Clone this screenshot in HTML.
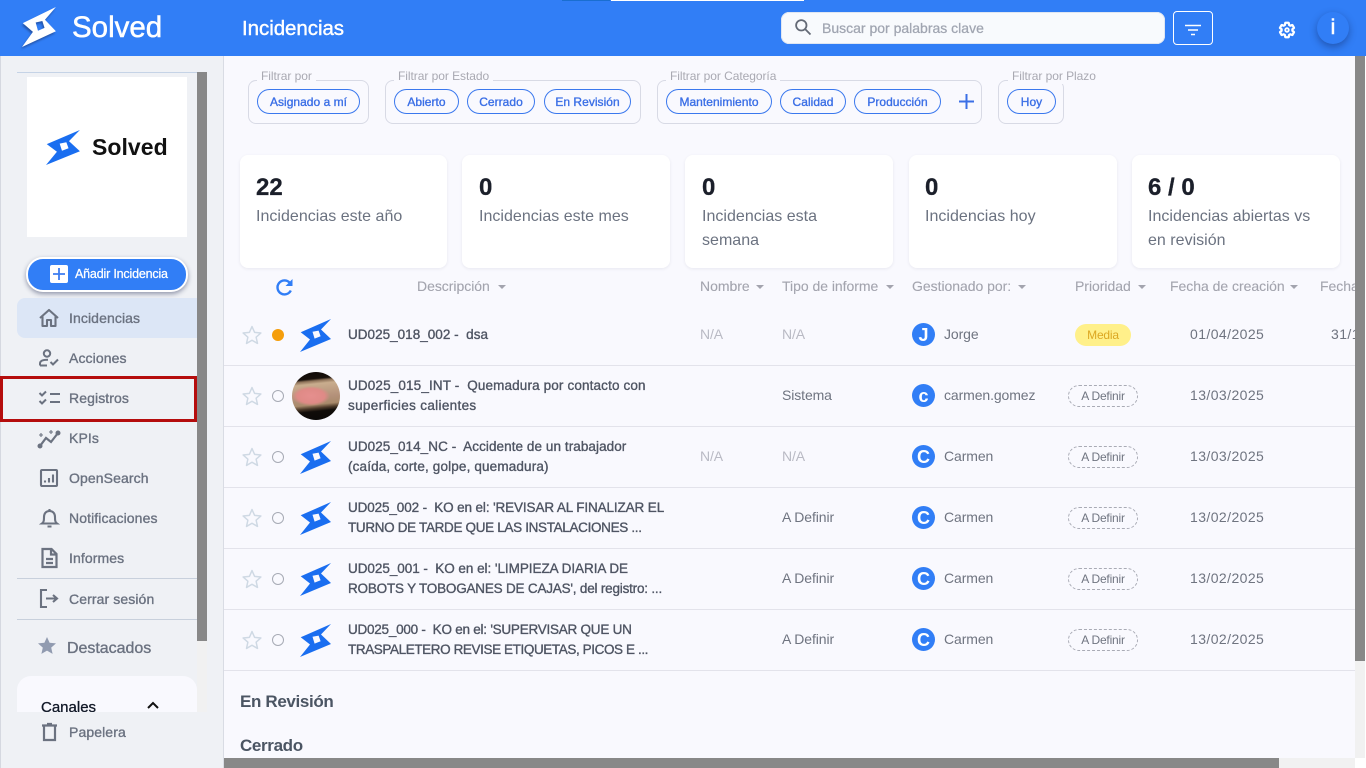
<!DOCTYPE html>
<html lang="es">
<head>
<meta charset="utf-8">
<title>Solved - Incidencias</title>
<style>
html,body{margin:0;padding:0;width:1366px;height:768px;overflow:hidden;background:#fff}
body{position:relative;font-family:"Liberation Sans",sans-serif;color:#4b5563}
.a,.t{position:absolute}
.t{white-space:nowrap;line-height:20px}
svg{position:absolute;display:block;overflow:visible}
#hdr{position:absolute;left:0;top:0;width:1366px;height:56px;background:#317ef6}
#side{position:absolute;left:0;top:56px;width:223px;height:712px;background:#eff1f5;border-right:1px solid #d9dce4;box-shadow:inset 1px 0 0 #d5d8e0}
#main{position:absolute;left:224px;top:56px;width:1131px;height:702px;background:#f9f9fe;overflow:hidden}
.nav{font-size:14px;color:#6b7280;-webkit-text-stroke:.35px #6b7280;left:69px;letter-spacing:.1px}
.g{position:absolute;top:80px;height:42px;border:1px solid #d8dae5;border-radius:8px}
.gl{position:absolute;top:69px;height:15px;line-height:15px;font-size:12px;color:#a9a9b2;background:#f9f9fe;padding:0 4px;white-space:nowrap;letter-spacing:-.05px}
.p{position:absolute;top:89px;height:23px;line-height:25px;border:1.2px solid #3a78ee;border-radius:13px;text-align:center;font-size:12px;color:#3b6fe6;-webkit-text-stroke:.35px #3b6fe6;box-sizing:content-box;white-space:nowrap;letter-spacing:.03px}
.c{position:absolute;top:155px;height:113px;background:#fff;border-radius:8px;box-shadow:0 1px 3px rgba(40,40,80,.08)}
.n{font-size:24px;font-weight:700;color:#1b1f2a;top:178px;-webkit-text-stroke:.3px #1b1f2a}
.l{font-size:16px;color:#6b7280;letter-spacing:.02px}
.h{font-size:14px;color:#a3a4ae;-webkit-text-stroke:.1px #a3a4ae;top:276px;letter-spacing:-.03px}
.car{position:absolute;top:285px;width:0;height:0;border-left:4.5px solid transparent;border-right:4.5px solid transparent;border-top:4.5px solid #a3a4ae}
.r{position:absolute;left:0;height:0;width:1366px}
.ln{position:absolute;left:224px;width:1131px;height:1px;background:#e3e3eb}
.d{font-size:13.5px;color:#4f5563;-webkit-text-stroke:.35px #4f5563;left:348px;margin-top:1px}
.m{font-size:14px;color:#6f7480;letter-spacing:-.1px}
.dt{letter-spacing:.42px}
.na{color:#b9bac4}
.av{position:absolute;left:912px;width:23px;height:23px;border-radius:50%;background:#317ef6;color:#fff;font-size:18px;font-weight:700;text-align:center;line-height:24px}
.ch{position:absolute;left:1068px;width:68px;height:20px;line-height:20px;border:1px dashed #a9abb5;border-radius:11px;text-align:center;font-size:12px;color:#6f7480;letter-spacing:-.2px}
.st{position:absolute;left:272px;width:10px;height:10px;border:1.4px solid #a7abb5;border-radius:50%}
</style>
</head>
<body>
<svg width="0" height="0" style="position:absolute">
<defs>
<symbol id="bolt" viewBox="0 0 32 33" preserveAspectRatio="none">
<path fill-rule="evenodd" d="M31 0L.7 13.3L10 20.5L0 33L31 20L21 10.5ZM12.5 12.8L18.6 11.6L20.6 17.2L14.6 19.6Z"/>
</symbol>
<symbol id="star" viewBox="0 0 24 24">
<path d="M12 2.8l2.8 6.3 6.9.7-5.2 4.6 1.5 6.8-6-3.5-6 3.5 1.5-6.8-5.2-4.6 6.9-.7z" fill="none" stroke="#cfd9e4" stroke-width="1.6" stroke-linejoin="round"/>
</symbol>
</defs>
</svg>

<!-- Header -->
<div id="hdr"></div>
<div class="a" style="left:562px;top:0;width:48px;height:1px;background:#1a6ed0"></div>
<div class="a" style="left:611px;top:0;width:193px;height:1px;background:#fff"></div>
<svg style="left:22px;top:7px;filter:drop-shadow(-1px 2px 1px rgba(20,30,70,.45))" width="35" height="40"><use href="#bolt" width="35" height="40" fill="#fff"/></svg>
<div class="t" style="left:72px;top:10px;line-height:36px;font-size:29.5px;color:#fff;-webkit-text-stroke:.5px #fff;letter-spacing:0">Solved</div>
<div class="t" style="left:242px;top:17px;line-height:24px;font-size:20.5px;color:#fff;-webkit-text-stroke:.4px #fff;letter-spacing:-.05px">Incidencias</div>
<div class="a" style="left:781px;top:12px;width:384px;height:32px;border-radius:8px;background:#f8fafd;box-shadow:0 0 0 1px #dfe6f2 inset"></div>
<svg style="left:794px;top:18px" width="18" height="18" viewBox="0 0 18 18" fill="none" stroke="#646a76" stroke-width="1.8"><circle cx="7.3" cy="7.3" r="5.2"/><path d="M11.3 11.3L16.5 16.5"/></svg>
<div class="t" style="left:822px;top:18px;font-size:14px;color:#a0a5b1;-webkit-text-stroke:.25px #a0a5b1;letter-spacing:0">Buscar por palabras clave</div>
<div class="a" style="left:1173px;top:11px;width:38px;height:32px;border:1px solid #fff;border-radius:4px"></div>
<svg style="left:1185px;top:24px" width="16" height="12" viewBox="0 0 16 12" stroke="#fff" stroke-width="1.6"><path d="M0 1.5H16M3 6H13M6 10.5H10"/></svg>
<svg style="left:1278px;top:21px" width="18" height="18" viewBox="0 0 24 24" fill="none" stroke="#fff" stroke-width="3" stroke-linejoin="round"><path d="M19.14 12.94c.04-.3.06-.61.06-.94 0-.32-.02-.64-.07-.94l2.03-1.58a.49.49 0 0 0 .12-.61l-1.92-3.32a.488.488 0 0 0-.59-.22l-2.39.96c-.5-.38-1.03-.7-1.62-.94l-.36-2.54a.484.484 0 0 0-.48-.41h-3.84c-.24 0-.43.17-.47.41l-.36 2.54c-.59.24-1.13.57-1.62.94l-2.39-.96c-.22-.08-.47 0-.59.22L2.74 8.87c-.12.21-.08.47.12.61l2.03 1.58c-.05.3-.09.63-.09.94s.02.64.07.94l-2.03 1.58a.49.49 0 0 0-.12.61l1.92 3.32c.12.22.37.29.59.22l2.39-.96c.5.38 1.03.7 1.62.94l.36 2.54c.05.24.24.41.48.41h3.84c.24 0 .44-.17.47-.41l.36-2.54c.59-.24 1.13-.56 1.62-.94l2.39.96c.22.08.47 0 .59-.22l1.92-3.32c.12-.22.07-.47-.12-.61l-2.01-1.58z"/><circle cx="12" cy="12" r="2.4" stroke-width="2.4"/></svg>
<div class="a" style="left:1317px;top:12px;width:32px;height:32px;border-radius:50%;background:#317ef6;box-shadow:0 3px 8px rgba(15,35,90,.45);color:#fff;text-align:center;font-size:21px;line-height:32px;-webkit-text-stroke:.6px #fff">i</div>

<!-- Sidebar -->
<div id="side"></div>
<div class="a" style="left:17px;top:72px;width:180px;height:1px;background:#c5d3e6"></div>
<div class="a" style="left:27px;top:77px;width:160px;height:160px;background:#fff"></div>
<div class="a" style="left:197px;top:72px;width:10px;height:569px;background:#888"></div>
<div class="a" style="left:197px;top:641px;width:10px;height:71px;background:#f1f1f1"></div>
<svg style="left:46px;top:130px" width="35" height="35"><use href="#bolt" width="35" height="35" fill="#1a6ef0"/></svg>
<div class="t" style="left:92px;top:133px;line-height:28px;font-size:23px;font-weight:700;color:#111;letter-spacing:.05px">Solved</div>

<div class="a" style="left:26px;top:257px;width:158px;height:31px;border:2px solid #fff;border-radius:17px;background:#317ef6;box-shadow:0 2px 5px rgba(30,40,80,.45)"></div>
<div class="a" style="left:50px;top:265px;width:18px;height:18px;background:#fff;border-radius:2px"></div>
<svg style="left:53px;top:268px" width="12" height="12" stroke="#3c7cf0" stroke-width="1.8"><path d="M6 0V12M0 6H12"/></svg>
<div class="t" style="left:75px;top:264px;font-size:12.5px;color:#fff;-webkit-text-stroke:.25px #fff;letter-spacing:-.18px">Añadir Incidencia</div>

<div class="a" style="left:17px;top:298px;width:180px;height:40px;border-radius:8px 0 0 8px;background:#dce6f6"></div>
<div class="a" style="left:0;top:376px;width:197px;height:46px;box-sizing:border-box;border:3px solid #b50d0d"></div>

<svg style="left:39px;top:308px" width="20" height="20" viewBox="0 0 20 20" fill="none" stroke="#6b7280" stroke-width="2.1" stroke-linejoin="round"><path d="M1 10L10 2L19 10M3.5 8.5V18H8V12H12V18H16.5V8.5"/></svg>
<div class="t nav" style="top:308px">Incidencias</div>
<svg style="left:39px;top:349px" width="20" height="18" viewBox="0 0 20 18" fill="none" stroke="#6b7280" stroke-width="2"><circle cx="8" cy="4.5" r="3.2"/><path d="M1 16.5V14.5C1 12 4 10.8 9 10.8M1 16.5H8M11.5 13L14 15.5L19 10.5"/></svg>
<div class="t nav" style="top:348px">Acciones</div>
<svg style="left:39px;top:391px" width="21" height="14" viewBox="0 0 21 14" fill="none" stroke="#6b7280" stroke-width="2"><path d="M0.5 2L3 4.5L7 .5M.5 10L3 12.5L7 8.5M11 3H21M11 11H21"/></svg>
<div class="t nav" style="top:388px">Registros</div>
<svg style="left:38px;top:429px" width="23" height="19" viewBox="0 0 23 19" fill="none" stroke="#6b7280" stroke-width="2.2"><path d="M2 17L8 9L13 13L20 4"/><circle cx="2" cy="17" r="1.4" fill="#6b7280"/><circle cx="20" cy="4" r="1.4" fill="#6b7280"/><path stroke-width="1.1" d="M3 4V8M1 6H5M13 1V5M11 3H15"/></svg>
<div class="t nav" style="top:428px">KPIs</div>
<svg style="left:40px;top:469px" width="18" height="18" viewBox="0 0 18 18" fill="none" stroke="#6b7280" stroke-width="2.1"><rect x="1" y="1" width="16" height="16" rx="1"/><path d="M5 13.5V11.5M9 13.5V9M13 13.5V5.5"/></svg>
<div class="t nav" style="top:468px">OpenSearch</div>
<svg style="left:41px;top:508px" width="17" height="20" viewBox="0 0 17 20" fill="none" stroke="#6b7280" stroke-width="2.1"><path d="M1 15.5C3 14 3 12 3 9C3 5.5 5 3 8.5 3C12 3 14 5.5 14 9C14 12 14 14 16 15.5ZM8.5 1V3M6.5 18.5H10.5"/></svg>
<div class="t nav" style="top:508px">Notificaciones</div>
<svg style="left:41px;top:548px" width="17" height="20" viewBox="0 0 17 20" fill="none" stroke="#6b7280" stroke-width="2.2"><path d="M1.5 1H10.5L15.5 6V19H1.5ZM10 1V6.5H15.5M5 11H12M5 15H12"/></svg>
<div class="t nav" style="top:548px">Informes</div>
<div class="a" style="left:17px;top:578px;width:180px;height:1px;background:#c8d0dc"></div>
<svg style="left:40px;top:589px" width="19" height="19" viewBox="0 0 19 19" fill="none" stroke="#6b7280" stroke-width="2.1"><path d="M7 1H1V18H7M6 9.5H17M13 6L17 9.5L13 13"/></svg>
<div class="t nav" style="top:589px">Cerrar sesión</div>
<div class="a" style="left:17px;top:619px;width:180px;height:1px;background:#c8d0dc"></div>
<svg style="left:38px;top:637px" width="18" height="17" viewBox="0 0 18 17" fill="#919bb0"><path d="M9 0l2.6 5.8 6.4.6-4.8 4.2 1.4 6.3L9 13.6l-5.6 3.3 1.4-6.3L0 6.4l6.4-.6z"/></svg>
<div class="t" style="left:67px;top:639px;font-size:16px;color:#6b7280;-webkit-text-stroke:.35px #6b7280;letter-spacing:-.03px">Destacados</div>
<div class="a" style="left:17px;top:676px;width:180px;height:36px;border-radius:14px 14px 0 0;background:#f9f9fe;overflow:hidden">
<div class="t" style="left:24px;top:22px;font-size:15px;color:#111827;-webkit-text-stroke:.3px #111827">Canales</div>
<svg style="left:130px;top:25px" width="12" height="8" fill="none" stroke="#111" stroke-width="2"><path d="M1 7L6 2L11 7"/></svg>
</div>
<svg style="left:42px;top:723px" width="15" height="18" viewBox="0 0 15 18" fill="none" stroke="#6b7280" stroke-width="2.2"><path d="M0 2.5H15M5 1H10M2 3V17H13V3"/></svg>
<div class="t nav" style="top:722px">Papelera</div>

<!-- Main -->
<div id="main"></div>
<div class="a" style="left:224px;top:56px;width:1131px;height:702px;overflow:hidden"><div class="a" style="left:-224px;top:-56px;width:1366px;height:768px">

<div class="g" style="left:248px;width:119px"></div><div class="gl" style="left:257px">Filtrar por</div>
<div class="p" style="left:257px;width:101px">Asignado a mí</div>
<div class="g" style="left:385px;width:254px"></div><div class="gl" style="left:394px">Filtrar por Estado</div>
<div class="p" style="left:394px;width:63px">Abierto</div>
<div class="p" style="left:467px;width:66px">Cerrado</div>
<div class="p" style="left:544px;width:85px">En Revisión</div>
<div class="g" style="left:657px;width:323px"></div><div class="gl" style="left:666px">Filtrar por Categoría</div>
<div class="p" style="left:666px;width:104px">Mantenimiento</div>
<div class="p" style="left:780px;width:64px">Calidad</div>
<div class="p" style="left:854px;width:85px">Producción</div>
<svg style="left:959px;top:94px" width="15" height="15" stroke="#3b6fe6" stroke-width="2"><path d="M7.5 0V15M0 7.5H15"/></svg>
<div class="g" style="left:998px;width:64px"></div><div class="gl" style="left:1008px">Filtrar por Plazo</div>
<div class="p" style="left:1007px;width:47px">Hoy</div>

<div class="c" style="left:240px;width:207px"></div>
<div class="c" style="left:462px;width:208px"></div>
<div class="c" style="left:685px;width:208px"></div>
<div class="c" style="left:909px;width:208px"></div>
<div class="c" style="left:1132px;width:208px"></div>
<div class="t n" style="left:256px">22</div>
<div class="t l" style="left:256px;top:207px">Incidencias este año</div>
<div class="t n" style="left:479px">0</div>
<div class="t l" style="left:479px;top:207px">Incidencias este mes</div>
<div class="t n" style="left:702px">0</div>
<div class="t l" style="left:702px;top:207px">Incidencias esta</div>
<div class="t l" style="left:702px;top:231px">semana</div>
<div class="t n" style="left:925px">0</div>
<div class="t l" style="left:925px;top:207px">Incidencias hoy</div>
<div class="t n" style="left:1148px">6 / 0</div>
<div class="t l" style="left:1148px;top:207px">Incidencias abiertas vs</div>
<div class="t l" style="left:1148px;top:231px">en revisión</div>

<svg style="left:275px;top:278px" width="19" height="19" viewBox="0 0 19 19" fill="none" stroke="#317ef6" stroke-width="2.4"><path d="M15.8 12.5A7 7 0 1 1 14.5 4.5L16 6"/><path fill="#317ef6" stroke="none" d="M17.5 1V8H10.5Z"/></svg>
<div class="t h" style="left:417px">Descripción</div><div class="car" style="left:498px"></div>
<div class="t h" style="left:700px">Nombre</div><div class="car" style="left:756px"></div>
<div class="t h" style="left:782px">Tipo de informe</div><div class="car" style="left:886px"></div>
<div class="t h" style="left:912px">Gestionado por:</div><div class="car" style="left:1018px"></div>
<div class="t h" style="left:1075px">Prioridad</div><div class="car" style="left:1138px"></div>
<div class="t h" style="left:1170px">Fecha de creación</div><div class="car" style="left:1290px"></div>
<div class="t h" style="left:1320px">Fecha</div>

<!-- Row 1 -->
<div class="r" style="top:304px">
<svg style="left:241px;top:20px" width="22" height="22"><use href="#star" width="22" height="22"/></svg>
<div class="a" style="left:272px;top:25px;width:12px;height:12px;border-radius:50%;background:#f59e0b"></div>
<svg style="left:300px;top:15px" width="32" height="33"><use href="#bolt" width="32" height="33" fill="#1a6ef0"/></svg>
<div class="t d" style="top:20px;letter-spacing:.02px">UD025_018_002 -&nbsp; dsa</div>
<div class="t m na" style="left:700px;top:20px">N/A</div>
<div class="t m na" style="left:782px;top:20px">N/A</div>
<div class="av" style="top:19px">J</div>
<div class="t m" style="left:944px;top:20px">Jorge</div>
<div class="a" style="left:1075px;top:20px;width:56px;height:22px;border-radius:11px;background:#fff08a;color:#dca722;font-size:12px;line-height:22px;text-align:center;letter-spacing:-.2px">Media</div>
<div class="t m dt" style="left:1190px;top:20px">01/04/2025</div>
<div class="t m dt" style="left:1331px;top:20px">31/1</div>
</div>
<div class="ln" style="top:365px"></div>

<!-- Row 2 -->
<div class="r" style="top:365px">
<svg style="left:241px;top:20px" width="22" height="22"><use href="#star" width="22" height="22"/></svg>
<div class="st" style="top:25px"></div>
<div class="a" style="left:292px;top:7px;width:48px;height:48px;border-radius:50%;background:radial-gradient(ellipse 19px 10px at 19px 24px,#e58f8e 0,#df8a86 72%,rgba(214,130,120,0) 100%),linear-gradient(174deg,#0e0907 0,#17100b 17%,#8d7259 21%,#c9ad8e 27%,#b4917a 52%,#a98a6b 66%,#4c3929 73%,#100c09 79%,#0a0807 100%)"></div>
<div class="t d" style="top:10px;letter-spacing:.14px">UD025_015_INT -&nbsp; Quemadura por contacto con</div>
<div class="t d" style="top:30px;letter-spacing:.33px">superficies calientes</div>
<div class="t m" style="left:782px;top:20px">Sistema</div>
<div class="av" style="top:19px">c</div>
<div class="t m" style="left:944px;top:20px">carmen.gomez</div>
<div class="ch" style="top:20px">A Definir</div>
<div class="t m dt" style="left:1190px;top:20px">13/03/2025</div>
</div>
<div class="ln" style="top:426px"></div>

<!-- Row 3 -->
<div class="r" style="top:426px">
<svg style="left:241px;top:20px" width="22" height="22"><use href="#star" width="22" height="22"/></svg>
<div class="st" style="top:25px"></div>
<svg style="left:300px;top:15px" width="32" height="33"><use href="#bolt" width="32" height="33" fill="#1a6ef0"/></svg>
<div class="t d" style="top:10px;letter-spacing:.07px">UD025_014_NC -&nbsp; Accidente de un trabajador</div>
<div class="t d" style="top:30px;letter-spacing:.15px">(caída, corte, golpe, quemadura)</div>
<div class="t m na" style="left:700px;top:20px">N/A</div>
<div class="t m na" style="left:782px;top:20px">N/A</div>
<div class="av" style="top:19px">C</div>
<div class="t m" style="left:944px;top:20px">Carmen</div>
<div class="ch" style="top:20px">A Definir</div>
<div class="t m dt" style="left:1190px;top:20px">13/03/2025</div>
</div>
<div class="ln" style="top:487px"></div>

<!-- Row 4 -->
<div class="r" style="top:487px">
<svg style="left:241px;top:20px" width="22" height="22"><use href="#star" width="22" height="22"/></svg>
<div class="st" style="top:25px"></div>
<svg style="left:300px;top:15px" width="32" height="33"><use href="#bolt" width="32" height="33" fill="#1a6ef0"/></svg>
<div class="t d" style="top:10px;letter-spacing:-.12px">UD025_002 -&nbsp; KO en el: 'REVISAR AL FINALIZAR EL</div>
<div class="t d" style="top:30px;letter-spacing:-.33px">TURNO DE TARDE QUE LAS INSTALACIONES ...</div>
<div class="t m" style="left:782px;top:20px">A Definir</div>
<div class="av" style="top:19px">C</div>
<div class="t m" style="left:944px;top:20px">Carmen</div>
<div class="ch" style="top:20px">A Definir</div>
<div class="t m dt" style="left:1190px;top:20px">13/02/2025</div>
</div>
<div class="ln" style="top:548px"></div>

<!-- Row 5 -->
<div class="r" style="top:548px">
<svg style="left:241px;top:20px" width="22" height="22"><use href="#star" width="22" height="22"/></svg>
<div class="st" style="top:25px"></div>
<svg style="left:300px;top:15px" width="32" height="33"><use href="#bolt" width="32" height="33" fill="#1a6ef0"/></svg>
<div class="t d" style="top:10px;letter-spacing:-.04px">UD025_001 -&nbsp; KO en el: 'LIMPIEZA DIARIA DE</div>
<div class="t d" style="top:30px;letter-spacing:-.2px">ROBOTS Y TOBOGANES DE CAJAS', del registro: ...</div>
<div class="t m" style="left:782px;top:20px">A Definir</div>
<div class="av" style="top:19px">C</div>
<div class="t m" style="left:944px;top:20px">Carmen</div>
<div class="ch" style="top:20px">A Definir</div>
<div class="t m dt" style="left:1190px;top:20px">13/02/2025</div>
</div>
<div class="ln" style="top:609px"></div>

<!-- Row 6 -->
<div class="r" style="top:609px">
<svg style="left:241px;top:20px" width="22" height="22"><use href="#star" width="22" height="22"/></svg>
<div class="st" style="top:25px"></div>
<svg style="left:300px;top:15px" width="32" height="33"><use href="#bolt" width="32" height="33" fill="#1a6ef0"/></svg>
<div class="t d" style="top:10px;letter-spacing:-.24px">UD025_000 -&nbsp; KO en el: 'SUPERVISAR QUE UN</div>
<div class="t d" style="top:30px;letter-spacing:-.4px">TRASPALETERO REVISE ETIQUETAS, PICOS E ...</div>
<div class="t m" style="left:782px;top:20px">A Definir</div>
<div class="av" style="top:19px">C</div>
<div class="t m" style="left:944px;top:20px">Carmen</div>
<div class="ch" style="top:20px">A Definir</div>
<div class="t m dt" style="left:1190px;top:20px">13/02/2025</div>
</div>
<div class="ln" style="top:670px"></div>

<div class="t" style="left:240px;top:692px;font-size:17px;font-weight:700;color:#4b5563;letter-spacing:-.35px">En Revisión</div>
<div class="t" style="left:240px;top:736px;font-size:17px;font-weight:700;color:#4b5563;letter-spacing:-.35px">Cerrado</div>
</div></div>

<!-- Scrollbars -->
<div class="a" style="left:1355px;top:56px;width:10px;height:605px;background:#888"></div>
<div class="a" style="left:1355px;top:661px;width:10px;height:97px;background:#f1f1f1"></div>
<div class="a" style="left:224px;top:758px;width:1055px;height:10px;background:#888"></div>
<div class="a" style="left:1279px;top:758px;width:76px;height:10px;background:#f1f1f1"></div>
</body>
</html>
